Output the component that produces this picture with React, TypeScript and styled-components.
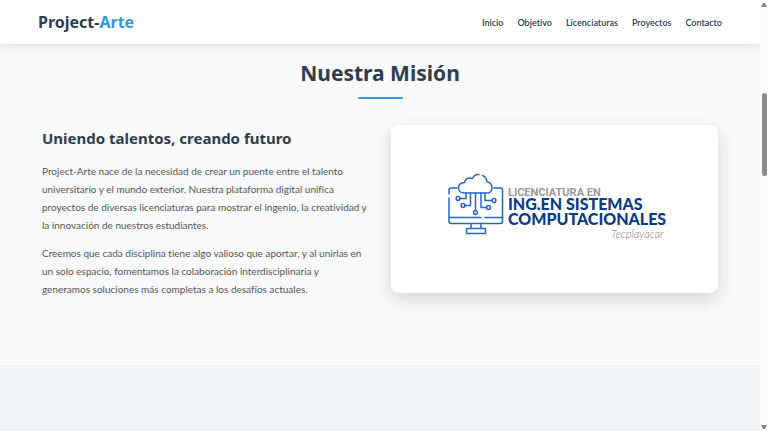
import React from "react";
import styled, { createGlobalStyle } from "styled-components";

const GlobalStyle = createGlobalStyle`
  *, *::before, *::after { box-sizing: border-box; }
  body {
    margin: 0;
    background: #f8f9fb;
    color: #555;
    font-family: "Noto Sans", "Open Sans", sans-serif;
    font-size: 10px;
    font-variant-ligatures: none;
    overflow: hidden;
  }
  h1, h2, h3, p, ul { margin: 0; padding: 0; }
`;

const Shell = styled.div`
  display: flex;
  height: 100vh;
`;

const Page = styled.div`
  display: flex;
  flex: 1;
  flex-direction: column;
  min-width: 0;
  overflow: hidden;
`;

const Header = styled.header`
  display: flex;
  flex: none;
  align-items: center;
  justify-content: space-between;
  height: 44px;
  padding: 0 5%;
  background: #fff;
  box-shadow: 0 2px 11px rgba(0, 0, 0, 0.1);
  z-index: 1;
`;

const Brand = styled.a`
  color: #2c3e50;
  font-size: 16px;
  font-weight: 700;
  line-height: 24px;
  text-decoration: none;
`;

const Accent = styled.span`
  color: #3498db;
`;

const NavList = styled.ul`
  display: flex;
  gap: 14px;
  list-style: none;
`;

const NavLink = styled.a`
  color: #2c3e50;
  font-family: Lato, sans-serif;
  font-size: 9px;
  font-weight: 600;
  line-height: 12px;
  text-decoration: none;
`;

const Mission = styled.section`
  flex: none;
  padding: 13px 42px 67px;
`;

const Title = styled.h2`
  display: flex;
  flex-direction: column;
  align-items: center;
  gap: 8px;
  margin-bottom: 26px;
  color: #2c3e50;
  font-size: 21px;
  font-weight: 700;
  line-height: 32px;

  &::after {
    content: "";
    width: 45px;
    height: 2px;
    border-radius: 1px;
    background: #3498db;
  }
`;

const Columns = styled.div`
  display: grid;
  grid-template-columns: 1fr 1fr;
  align-items: start;
  gap: 22px;
`;

const Copy = styled.div`
  display: flex;
  flex-direction: column;
  gap: 10px;
`;

const Subtitle = styled.h3`
  color: #2c3e50;
  font-size: 15px;
  font-weight: 700;
  line-height: 27px;
`;

const Paragraph = styled.p`
  font-family: Lato, sans-serif;
  font-size: 10px;
  line-height: 18px;
`;

const Card = styled.div`
  display: flex;
  align-items: center;
  justify-content: center;
  height: 168px;
  border-radius: 8px;
  background: #fff;
  box-shadow: 0 6px 17px rgba(0, 0, 0, 0.15);
`;

const Band = styled.section`
  flex: 1;
  background: #eff4f8;
`;

const ScrollRail = styled.div`
  display: flex;
  flex: none;
  flex-direction: column;
  align-items: center;
  justify-content: space-between;
  width: 8px;
  padding: 3px 0 2px;
  background: #fcfcfc;
`;

const Track = styled.div`
  flex: 1;
  padding-top: 86px;
`;

const Thumb = styled.div`
  width: 5px;
  height: 83px;
  border-radius: 3px;
  background: #8b8b8b;
`;

const links = ["Inicio", "Objetivo", "Licenciaturas", "Proyectos", "Contacto"];

function CareerLogo() {
  return (
    <svg width="228" height="76" viewBox="441 171 228 76" role="img" aria-label="Licenciatura en Ing. en Sistemas Computacionales">
      <g fill="none" stroke="#2468c8" strokeWidth="1.5" strokeLinecap="round" strokeLinejoin="round">
        <path d="M457 188H451Q449 188 449 190V194M449 198V221Q449 223.500 451.500 223.500H500Q502.500 223.500 502.500 221V190Q502.500 188 500.500 188H494" />
        <path d="M449 217.500H481M485 217.500H502.500" />
        <path d="M471 223.500V228.500M481 223.500V228.500M466.500 228.500H485.500V233.500H466.500Z" />
        <path d="M479 174.600Q475 173.800 472.500 178.500Q466 176.500 464.500 182.500Q458.500 183 458.500 188Q459 193 464 193H488Q492 192 492 187.500Q491.500 182.500 487 181.800Q486 176.500 482.500 175.500" />
        <path d="M466 193V198.500H460M470.500 193V205.500H465M475.500 193V210.500M481 193V207.500H486.500M485 193V200.500H492" />
        <circle cx="458" cy="198.500" r="1.900" />
        <circle cx="463" cy="205.500" r="1.900" />
        <circle cx="475.500" cy="212.500" r="1.900" />
        <circle cx="488.500" cy="207.500" r="1.900" />
        <circle cx="494" cy="200.500" r="1.900" />
      </g>
      <g fontFamily="Lato, sans-serif">
        <text x="508" y="196" fontSize="11" fontWeight="700" fontFamily="Roboto, sans-serif" fill="#999">LICENCIATURA EN</text>
        <text x="508" y="210" fontSize="16" fontWeight="900" fill="#073b86">ING.EN SISTEMAS</text>
        <text x="508" y="225" fontSize="16" fontWeight="900" fill="#073b86">COMPUTACIONALES</text>
        <text x="611" y="238" fontSize="11" fontWeight="300" fontStyle="italic" fill="#777">Tecplayacar</text>
      </g>
    </svg>
  );
}

function Arrow({ down = false }: { down?: boolean }) {
  return (
    <svg width="6" height="4" viewBox="0 0 6 4" aria-hidden="true">
      <path d={down ? "M0 0H6L4 4H2Z" : "M0 4H6L4 0H2Z"} fill="#858585" />
    </svg>
  );
}

export default function App() {
  return (
    <>
      <GlobalStyle />
      <Shell>
        <Page>
          <Header>
            <Brand href="#inicio">
              Project-<Accent>Arte</Accent>
            </Brand>
            <nav aria-label="Principal">
              <NavList>
                {links.map((label) => (
                  <li key={label}>
                    <NavLink href={`#${label.toLowerCase()}`}>{label}</NavLink>
                  </li>
                ))}
              </NavList>
            </nav>
          </Header>
          <Mission id="objetivo">
            <Title>Nuestra Misión</Title>
            <Columns>
              <Copy>
                <Subtitle>Uniendo talentos, creando futuro</Subtitle>
                <Paragraph>
                  Project-Arte nace de la necesidad de crear un puente entre el talento universitario y el mundo
                  exterior. Nuestra plataforma digital unifica proyectos de diversas licenciaturas para mostrar el
                  ingenio, la creatividad y la innovación de nuestros estudiantes.
                </Paragraph>
                <Paragraph>
                  Creemos que cada disciplina tiene algo valioso que aportar, y al unirlas en un solo espacio,
                  fomentamos la colaboración interdisciplinaria y generamos soluciones más completas a los desafíos
                  actuales.
                </Paragraph>
              </Copy>
              <Card>
                <CareerLogo />
              </Card>
            </Columns>
          </Mission>
          <Band id="licenciaturas" />
        </Page>
        <ScrollRail aria-hidden="true">
          <Arrow />
          <Track>
            <Thumb />
          </Track>
          <Arrow down />
        </ScrollRail>
      </Shell>
    </>
  );
}
